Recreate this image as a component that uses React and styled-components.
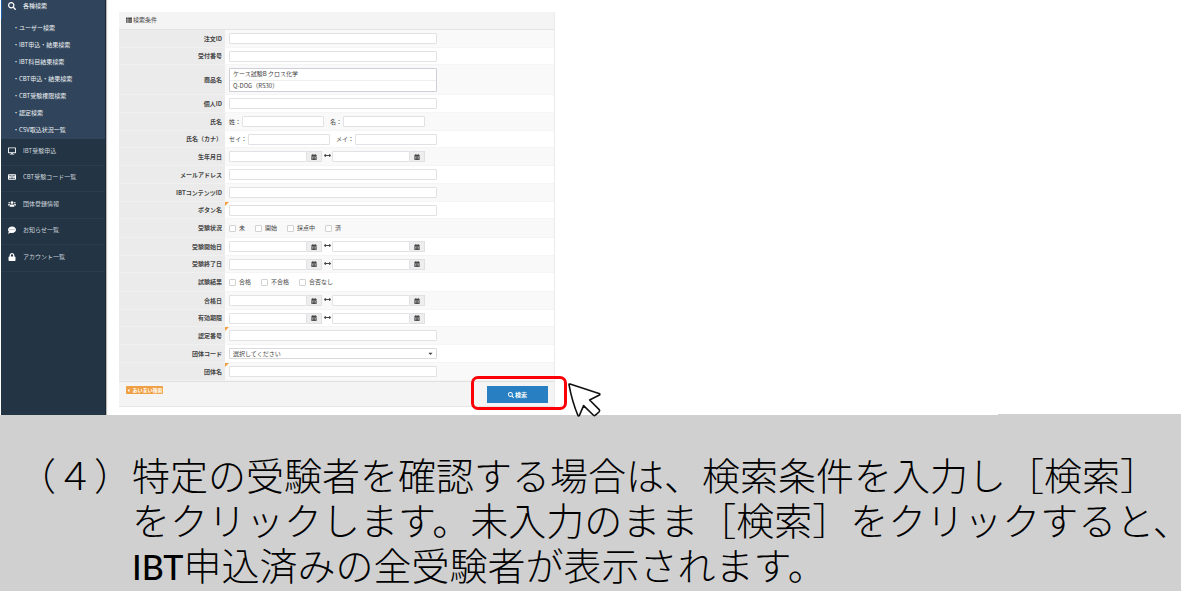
import React from "react";
import styled, { createGlobalStyle } from "styled-components";
import {
  FaSearch,
  FaDesktop,
  FaKeyboard,
  FaUsers,
  FaCommentDots,
  FaLock,
  FaThList,
  FaCalendarAlt,
  FaArrowsAltH,
  FaCaretLeft,
  FaCaretDown,
} from "react-icons/fa";

const GlobalStyle = createGlobalStyle`
  *, *::before, *::after { box-sizing: border-box; }
  body {
    margin: 0;
    background: #fff;
    color: #444;
    font-family: "Noto Sans CJK JP", "Noto Sans", sans-serif;
    font-size: 6px;
    line-height: 10px;
  }
  button, input, select { font: inherit; color: inherit; margin: 0; }
`;

const Page = styled.div`
  display: flex;
  flex-direction: column;
  min-height: 100vh;
`;

const Shell = styled.div`
  display: flex;
  padding-left: 1px;
`;

const Sidebar = styled.nav`
  flex: none;
  width: 105px;
  background: #233444;
  border-right: 1px solid #1b2835;
  box-shadow: 1px 0 1px #bbb;
  color: #cdd5dc;
`;

const ActiveGroup = styled.div`
  background: #30455b;
  padding-bottom: 1px;
  color: #e4e9ee;
`;

const ActiveLink = styled.a`
  display: flex;
  align-items: center;
  gap: 6px;
  height: 19px;
  padding: 0 0 8px 5px;
  border-left: 1px solid #1b62ad;
  color: #f4f6f8;
  text-decoration: none;
`;

const SubList = styled.ul`
  margin: 0;
  padding: 0;
  list-style: none;
`;

const SubLink = styled.a`
  display: flex;
  align-items: center;
  height: 17px;
  padding-left: 12px;
  color: #eef1f4;
  text-decoration: none;
  white-space: nowrap;
`;

const MenuList = styled(SubList)`
  li:nth-child(even) > a { height: 26px; }
`;

const MenuLink = styled.a`
  display: flex;
  align-items: center;
  gap: 6px;
  height: 27px;
  padding: 0 0 3px 6px;
  border-bottom: 1px solid #2a3d4f;
  color: #cdd5dc;
  text-decoration: none;
  white-space: nowrap;
`;

const MenuIcon = styled.span`
  display: flex;
  justify-content: center;
  width: 10px;
  color: #fff;
  font-size: 8px;
`;

const Main = styled.main`
  flex: 1;
  padding: 12px 0 8px 13px;
`;

const Card = styled.form`
  max-width: 436px;
  margin: 0;
  border-right: 1px solid #ebebeb;
`;

const CardHeader = styled.h1`
  display: flex;
  align-items: center;
  gap: 1px;
  height: 18px;
  margin: 0;
  padding: 0 7px 2px;
  background: #f4f4f4;
  border-bottom: 1px solid #e3e3e3;
  font-size: 6px;
  font-weight: 400;
`;

const Row = styled.div`
  position: relative;
  display: flex;
  height: ${(p) => p.$height}px;
  background: ${(p) => (p.$odd ? "#f9f9f9" : "#fff")};
`;

const labelStyle = `
  flex: none;
  display: flex;
  align-items: center;
  justify-content: flex-end;
  width: 106px;
  padding-right: 3px;
  background: #ebebeb;
  border-bottom: 1px solid #f0f0f0;
  font-weight: 700;
`;

const RowLabel = styled.label`${labelStyle}`;
const RowTitle = styled.span`${labelStyle}`;

const Fields = styled.div`
  flex: 1;
  display: flex;
  align-items: center;
  padding-left: 4px;
  border-bottom: 1px solid #f5f5f5;
`;

const FuzzyMark = styled.span`
  position: absolute;
  top: 0;
  left: 106px;
  border-top: 4px solid #f0a044;
  border-right: 4px solid transparent;
`;

const TextInput = styled.input`
  width: ${(p) => p.$width}px;
  height: 11px;
  padding: 0 3px;
  background: #fff;
  border: 1px solid #e2e2e6;
  border-radius: 1px;
`;

const NameField = styled.label`
  display: flex;
  align-items: center;
  gap: 1px;
  margin-right: 6px;
`;

const ListBox = styled.select`
  width: 208px;
  height: 24px;
  padding: 0;
  overflow: hidden;
  background: #fff;
  border: 1px solid #cfcfd8;
  border-radius: 1px;
  outline: none;

  option {
    height: 11px;
    min-height: 0;
    padding: 0 3px;
    line-height: 10px;
  }
  option + option { border-top: 1px solid #eee; }
`;

const SelectWrap = styled.div`
  position: relative;
  display: flex;
`;

const Select = styled.select`
  appearance: none;
  width: 208px;
  height: 11px;
  padding: 0 3px;
  background: #fff;
  border: 1px solid #d9d9de;
  border-radius: 1px;
  line-height: 9px;
`;

const SelectCaret = styled(FaCaretDown)`
  position: absolute;
  top: 2px;
  right: 3px;
  font-size: 7px;
  pointer-events: none;
`;

const DateGroup = styled.div`
  display: flex;
`;

const CalendarButton = styled.button`
  display: flex;
  align-items: center;
  justify-content: center;
  width: 15px;
  height: 11px;
  padding: 0;
  background: #eee;
  border: 1px solid #e0e0e4;
  border-left: 0;
`;

const RangeArrow = styled.span`
  display: flex;
  justify-content: center;
  width: 10px;
  padding-bottom: 2px;
  font-size: 7px;
`;

const CheckLabel = styled.label`
  display: flex;
  align-items: center;
  gap: 3px;
  margin-right: 10px;
`;

const CheckBox = styled.input`
  appearance: none;
  width: 7px;
  height: 7px;
  background: #fff;
  border: 1px solid #d2d2d2;
  border-radius: 1px;
`;

const CardFooter = styled.footer`
  position: relative;
  display: flex;
  align-items: flex-start;
  justify-content: space-between;
  height: 26px;
  padding: 4px 6px 0 7px;
  background: #f4f4f4;
  border-top: 1px solid #e0e0e0;
  border-bottom: 1px solid #e6e6e6;
`;

const FuzzyBadge = styled.span`
  display: flex;
  align-items: center;
  justify-content: center;
  gap: 1px;
  width: 37px;
  height: 8px;
  background: #f0a044;
  border-radius: 1px;
  color: #fff;
  font-size: 5px;
  font-weight: 700;
`;

const SearchButton = styled.button`
  display: flex;
  align-items: center;
  justify-content: center;
  gap: 1px;
  width: 61px;
  height: 17px;
  padding: 0;
  background: #2880c2;
  border: 0;
  color: #fff;
  font-weight: 700;
`;

const Highlight = styled.div`
  position: absolute;
  top: -6px;
  right: -13px;
  width: 96px;
  height: 34px;
  border: 3px solid #fb0007;
  border-radius: 7px;
  pointer-events: none;
`;

const Pointer = styled.svg`
  position: absolute;
  top: -1px;
  right: -49px;
  z-index: 1;
  width: 37px;
  height: 38px;
  pointer-events: none;
`;

const Caption = styled.section`
  position: relative;
  flex: 1;
  display: flex;
  padding: 36px 0 0 18px;
  background: #d0d0d0;
  color: #000;
  font-size: 38px;
  font-weight: 300;
  line-height: 45px;
  white-space: nowrap;

  &::before {
    content: "";
    position: absolute;
    top: -1px;
    right: 0;
    width: 183px;
    height: 1px;
    background: #d0d0d0;
  }

  p { margin: 0; }
`;

const Latin = styled.span`
  font-family: Lato, "Noto Sans", sans-serif;
  font-size: 34px;
  font-weight: 500;
`;

const subItems = [
  "ユーザー検索",
  "IBT申込・結果検索",
  "IBT科目結果検索",
  "CBT申込・結果検索",
  "CBT受験権限検索",
  "認定検索",
  "CSV取込状況一覧",
];

const menuItems = [
  { icon: FaDesktop, text: "IBT受験申込" },
  { icon: FaKeyboard, text: "CBT受験コード一覧" },
  { icon: FaUsers, text: "団体登録情報" },
  { icon: FaCommentDots, text: "お知らせ一覧" },
  { icon: FaLock, text: "アカウント一覧" },
];

const rows = [
  { id: "order", label: "注文ID", height: 18 },
  { id: "receipt", label: "受付番号", height: 17 },
  { id: "product", label: "商品名", height: 30, kind: "list", options: ["ケース試験B クロス化学", "Q-DOG（RS30）"] },
  { id: "person", label: "個人ID", height: 18 },
  { id: "name", label: "氏名", height: 18, kind: "name", parts: ["姓：", "名："] },
  { id: "kana", label: "氏名（カナ）", height: 17, kind: "name", parts: ["セイ：", "メイ："] },
  { id: "birth", label: "生年月日", height: 18, kind: "date" },
  { id: "mail", label: "メールアドレス", height: 18 },
  { id: "contents", label: "IBTコンテンツID", height: 18 },
  { id: "button", label: "ボタン名", height: 17, fuzzy: true },
  { id: "status", label: "受験状況", height: 19, kind: "check", options: ["未", "開始", "採点中", "済"] },
  { id: "start", label: "受験開始日", height: 18, kind: "date" },
  { id: "end", label: "受験終了日", height: 17, kind: "date" },
  { id: "result", label: "試験結果", height: 19, kind: "check", options: ["合格", "不合格", "合否なし"] },
  { id: "passed", label: "合格日", height: 18, kind: "date" },
  { id: "expiry", label: "有効期限", height: 17, kind: "date" },
  { id: "cert", label: "認定番号", height: 18, fuzzy: true },
  { id: "groupCode", label: "団体コード", height: 18, kind: "select" },
  { id: "group", label: "団体名", height: 18, fuzzy: true },
];

function DateInput({ label }) {
  return (
    <DateGroup>
      <TextInput type="text" $width={78} aria-label={label} />
      <CalendarButton type="button" aria-label={label + " カレンダー"}>
        <FaCalendarAlt />
      </CalendarButton>
    </DateGroup>
  );
}

function RowFields({ row }) {
  switch (row.kind) {
    case "list":
      return (
        <ListBox id={row.id} multiple size={2}>
          {row.options.map((o) => <option key={o}>{o}</option>)}
        </ListBox>
      );
    case "name":
      return row.parts.map((part) => (
        <NameField key={part}>
          {part}
          <TextInput type="text" $width={82} />
        </NameField>
      ));
    case "date":
      return (
        <>
          <DateInput label={row.label + " 開始"} />
          <RangeArrow><FaArrowsAltH /></RangeArrow>
          <DateInput label={row.label + " 終了"} />
        </>
      );
    case "check":
      return row.options.map((o) => (
        <CheckLabel key={o}>
          <CheckBox type="checkbox" />
          {o}
        </CheckLabel>
      ));
    case "select":
      return (
        <SelectWrap>
          <Select id={row.id}>
            <option>選択してください</option>
          </Select>
          <SelectCaret />
        </SelectWrap>
      );
    default:
      return <TextInput id={row.id} type="text" $width={208} />;
  }
}

function FormRow({ row, odd }) {
  const grouped = ["name", "date", "check"].includes(row.kind);
  return (
    <Row $height={row.height} $odd={odd}>
      {grouped ? <RowTitle>{row.label}</RowTitle> : <RowLabel htmlFor={row.id}>{row.label}</RowLabel>}
      <Fields>
        <RowFields row={row} />
      </Fields>
      {row.fuzzy && <FuzzyMark />}
    </Row>
  );
}

export default function App() {
  return (
    <Page>
      <GlobalStyle />
      <Shell>
        <Sidebar>
          <ActiveGroup>
            <ActiveLink href="#search">
              <MenuIcon><FaSearch /></MenuIcon>
              各種検索
            </ActiveLink>
            <SubList>
              {subItems.map((text) => (
                <li key={text}><SubLink href="#search">・{text}</SubLink></li>
              ))}
            </SubList>
          </ActiveGroup>
          <MenuList>
            {menuItems.map(({ icon: Icon, text }) => (
              <li key={text}>
                <MenuLink href="#menu">
                  <MenuIcon><Icon /></MenuIcon>
                  {text}
                </MenuLink>
              </li>
            ))}
          </MenuList>
        </Sidebar>
        <Main>
          <Card onSubmit={(e) => e.preventDefault()}>
            <CardHeader><FaThList />検索条件</CardHeader>
            {rows.map((row, i) => <FormRow key={row.id} row={row} odd={i % 2 === 0} />)}
            <CardFooter>
              <FuzzyBadge><FaCaretLeft />あいまい検索</FuzzyBadge>
              <SearchButton type="submit"><FaSearch />検索</SearchButton>
              <Highlight />
              <Pointer viewBox="0 0 37 38" aria-hidden="true">
                <path
                  d="M3 3.6Q3 2.8 4 3L33 12.4Q34.6 13.2 33.4 14L23.6 19L33.2 28.6Q34.2 29.8 33 31L29.4 34.2Q28.2 35 27.2 34L17.6 24.6L13.4 34.4Q12.6 35.8 11.8 34.2Q6 20 3 3.6Z"
                  fill="#fff"
                  stroke="#111"
                  strokeWidth="1.6"
                  strokeLinejoin="round"
                />
              </Pointer>
            </CardFooter>
          </Card>
        </Main>
      </Shell>
      <Caption>
        <span>（４）</span>
        <p>
          特定の受験者を確認する場合は、検索条件を入力し［検索］<br />
          をクリックします。未入力のまま［検索］をクリックすると、<br />
          <Latin>IBT</Latin>申込済みの全受験者が表示されます。
        </p>
      </Caption>
    </Page>
  );
}
